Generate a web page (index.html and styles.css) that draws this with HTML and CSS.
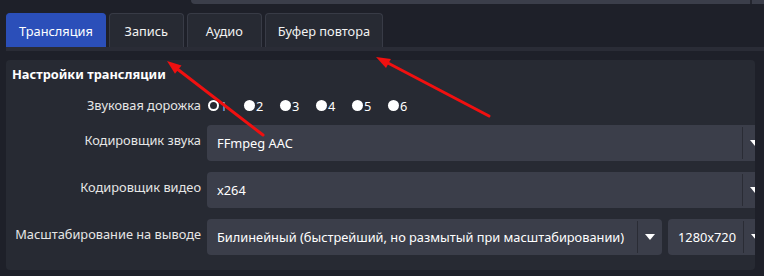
FILE: index.html
```html
<!DOCTYPE html>
<html lang="ru">
<head>
    <meta charset="UTF-8">
    <meta name="viewport" content="width=device-width, initial-scale=1.0">
    <title>Вывод</title>
    <link rel="stylesheet" href="styles.css">
</head>
<body>
    <div class="topbar">
        <div class="topbar-main"></div>
        <div class="topbar-sep"></div>
        <div class="topbar-rest"></div>
    </div>

    <div class="tabs">
        <div class="tab active">Трансляция</div>
        <div class="tab">Запись</div>
        <div class="tab">Аудио</div>
        <div class="tab">Буфер повтора</div>
    </div>
    <div class="tabline"></div>

    <div class="panel">
        <div class="title">Настройки трансляции</div>
        <div class="form">
            <div class="label label-radio">Звуковая дорожка</div>
            <div class="radios">
                <span class="radio"><i class="dot empty"></i><span class="num sel">1</span></span>
                <span class="radio"><i class="dot"></i><span class="num">2</span></span>
                <span class="radio"><i class="dot"></i><span class="num">3</span></span>
                <span class="radio"><i class="dot"></i><span class="num">4</span></span>
                <span class="radio"><i class="dot"></i><span class="num">5</span></span>
                <span class="radio"><i class="dot"></i><span class="num">6</span></span>
            </div>

            <div class="label">Кодировщик звука</div>
            <div class="combo">
                <span class="combo-text">FFmpeg AAC</span>
                <span class="combo-btn"><i class="caret"></i></span>
            </div>

            <div class="label">Кодировщик видео</div>
            <div class="combo">
                <span class="combo-text">x264</span>
                <span class="combo-btn"><i class="caret"></i></span>
            </div>

            <div class="label">Масштабирование на выводе</div>
            <div class="pair">
                <div class="combo">
                    <span class="combo-text">Билинейный (быстрейший, но размытый при масштабировании)</span>
                    <span class="combo-btn"><i class="caret"></i></span>
                </div>
                <div class="combo">
                    <span class="combo-text">1280x720</span>
                    <span class="combo-btn"><i class="caret"></i></span>
                </div>
            </div>
        </div>
    </div>

    <!-- red pointers drawn on top of the screenshot -->
    <svg class="arrows" width="764" height="276" viewBox="0 0 764 276">
        <line x1="263" y1="135" x2="176" y2="68" stroke="#f01010" stroke-width="3" stroke-linecap="round"/>
        <polygon points="167,61 181.5,65.4 175,73.8" fill="#f01010"/>
        <line x1="489" y1="116" x2="386" y2="62" stroke="#f01010" stroke-width="3" stroke-linecap="round"/>
        <polygon points="376,57 390.9,58.9 386,68.1" fill="#f01010"/>
    </svg>
</body>
</html>
```

FILE: styles.css
```css
body{
    margin: 0;
    width: 764px;
    height: 276px;
    overflow: hidden;
    background-color: #1e2029;
    font-family: "Noto Sans", "Open Sans", sans-serif;
    font-size: 12.8px;
    color: #ffffff;
    position: relative;
}
.topbar{
    display: flex;
    height: 4px;
    margin-left: 191px;
}
.topbar-main{
    width: 559px;
    background-color: #3b3e4a;
    border-bottom-left-radius: 4px;
}
.topbar-sep{
    width: 2px;
    background-color: #24262f;
}
.topbar-rest{
    flex: 1;
    background-color: #3b3e4a;
}
.tabs{
    display: flex;
    gap: 3px;
    margin-top: 9px;
    padding-left: 6px;
}
.tab{
    height: 34px;
    min-width: 75px;
    box-sizing: border-box;
    padding: 0 12px;
    display: flex;
    align-items: center;
    justify-content: center;
    background-color: #272a33;
    border: 1px solid #383b46;
    border-bottom: none;
    border-radius: 4px 4px 0 0;
    color: #f2f2f2;
}
.tab.active{
    background-color: #2b4fb9;
    border-color: #2b4fb9;
    color: #ffffff;
}
.tabline{
    height: 4px;
    margin-left: 6px;
    background-color: #2a2c36;
}
.panel{
    margin: 9px 0 0 6px;
    width: 749px;
    height: 210px;
    box-sizing: border-box;
    padding: 4px 0 0 6px;
    background-color: #272a33;
    border-radius: 4px;
    overflow: hidden;
}
.title{
    font-weight: bold;
    line-height: 20px;
}
.form{
    display: grid;
    grid-template-columns: 189px 560px;
    column-gap: 6px;
    row-gap: 11px;
    margin-top: 13px;
}
.label{
    text-align: right;
    color: #e6e6e6;
    padding-top: 6px;
    line-height: 18px;
    white-space: nowrap;
}
.label.label-radio{
    padding-top: 0;
    line-height: 17px;
}
.radios{
    display: flex;
    align-items: center;
    height: 17px;
    padding-left: 1px;
}
.radio{
    display: flex;
    align-items: center;
    width: 36px;
}
.dot{
    width: 11px;
    height: 11px;
    box-sizing: border-box;
    border-radius: 50%;
    background-color: #ffffff;
    margin-right: 1px;
}
.dot.empty{
    background-color: #272a33;
    border: 2px solid #ffffff;
}
.num.sel{
    color: #8fb8f0;
}
.combo{
    display: flex;
    height: 36px;
    background-color: #3b3e4a;
    border-radius: 4px;
}
.combo-text{
    flex: 1;
    padding-left: 10px;
    line-height: 36px;
    white-space: nowrap;
    overflow: hidden;
}
.combo-btn{
    width: 24px;
    display: flex;
    align-items: center;
    justify-content: center;
    border-left: 1px solid #2a2c35;
    margin: 2px 0;
}
.caret{
    width: 0;
    height: 0;
    border-left: 5.5px solid transparent;
    border-right: 5.5px solid transparent;
    border-top: 6px solid #ffffff;
}
.pair{
    display: grid;
    grid-template-columns: 455px 100px;
    column-gap: 6px;
}
.arrows{
    position: absolute;
    left: 0;
    top: 0;
    pointer-events: none;
}
```
